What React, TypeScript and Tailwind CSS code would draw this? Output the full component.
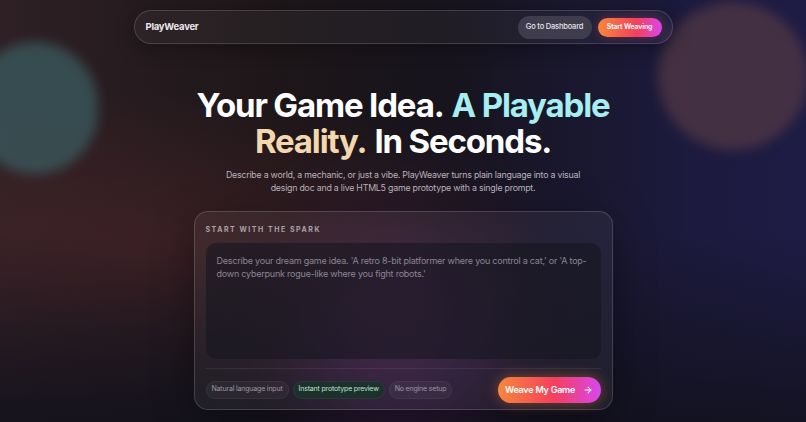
import { ArrowRight } from 'lucide-react';

const chips = [
    { label: 'Natural language input', tone: 'neutral' },
    { label: 'Instant prototype preview', tone: 'green' },
    { label: 'No engine setup', tone: 'neutral' },
];

function Backdrop() {
    return (
        <div className="absolute inset-0 overflow-hidden">
            <div className="absolute inset-0 bg-[linear-gradient(90deg,#2e2024_0%,#1d1619_35%,#17141d_55%,#1c1a3d_85%,#1e1c45_100%)]" />
            <div className="absolute inset-0 bg-[radial-gradient(ellipse_at_18%_60%,rgba(90,40,45,0.45),transparent_45%)]" />
            <div className="absolute inset-0 bg-[linear-gradient(180deg,transparent_55%,rgba(18,17,28,0.85)_100%)]" />
            <div className="absolute left-[-28px] top-[42px] w-[126px] h-[132px] rounded-full bg-[#3a585c] opacity-80 blur-[6px]" />
            <div className="absolute left-[658px] top-[2px] w-[150px] h-[148px] rounded-full bg-[#4b3444] opacity-85 blur-[6px]" />
            <div className="absolute left-[300px] top-[230px] w-[200px] h-[200px] rounded-full bg-[#6a2c78] opacity-40 blur-[50px]" />
        </div>
    );
}

function NavBar() {
    return (
        <nav className="w-[539px] h-[34px] mt-[10px] flex items-center justify-between rounded-full border border-white/15 bg-white/[0.04] pl-[11px] pr-[10px] shadow-[0_4px_20px_rgba(0,0,0,0.3)]">
            <span className="text-[9.5px] font-bold text-[#ece8ee] tracking-tight">PlayWeaver</span>
            <div className="flex items-center gap-[6px]">
                <button className="h-[23px] w-[74px] rounded-full bg-[#3f3d4d] text-[7.5px] font-medium text-[#e6e3ea] tracking-tight">
                    Go to Dashboard
                </button>
                <button className="h-[19px] w-[64px] rounded-full bg-[linear-gradient(90deg,#f7873a,#f43f5e_60%,#d946ef)] text-[7px] font-semibold text-white tracking-tight shadow-[0_0_10px_rgba(244,63,94,0.35)]">
                    Start Weaving
                </button>
            </div>
        </nav>
    );
}

export default function App() {
    return (
        <div className="relative w-full h-[422px] overflow-hidden font-['Inter',sans-serif]">
            <Backdrop />
            <div className="relative flex flex-col items-center">
                <NavBar />

                <h1 className="mt-[43px] flex flex-col items-center text-[33px] leading-[36px] font-bold tracking-[-0.035em] text-white">
                    <span className="flex gap-[8px]">
                        <span className="inline-block">Your Game Idea.</span>
                        <span className="inline-block text-[#a6eef2]">A Playable</span>
                    </span>
                    <span className="flex gap-[8px]">
                        <span className="inline-block text-[#f3d7ae]">Reality.</span>
                        <span className="inline-block">In Seconds.</span>
                    </span>
                </h1>

                <p className="mt-[9px] w-[362px] text-center text-[8.8px] leading-[13px] text-[#b9b3bd] tracking-tight">
                    Describe a world, a mechanic, or just a vibe. PlayWeaver turns plain language into a visual design doc and a live HTML5 game prototype with a single prompt.
                </p>

                <section className="mt-[17px] w-[419px] h-[199px] rounded-[14px] border border-white/15 bg-white/[0.05] px-[11px] pt-[13px] shadow-[0_10px_40px_rgba(0,0,0,0.35)] flex flex-col">
                    <span className="text-[7px] font-bold tracking-[0.22em] text-[#aaa2a9]">START WITH THE SPARK</span>
                    <div className="mt-[7px] h-[116px] rounded-[10px] bg-[#16151f]/60 px-[11px] pt-[11px]">
                        <p className="text-[9px] leading-[13px] text-[#8b8594] tracking-tight">
                            Describe your dream game idea. 'A retro 8-bit platformer where you control a cat,' or 'A top-down cyberpunk rogue-like where you fight robots.'
                        </p>
                    </div>
                    <div className="mt-[9px] border-t border-white/[0.07] pt-[8px] flex items-center justify-between">
                        <div className="flex items-center gap-[4px]">
                            {chips.map((c) => (
                                <span
                                    key={c.label}
                                    className={`h-[18px] px-[5px] flex items-center rounded-full border text-[7px] tracking-tight ${c.tone === 'green'
                                        ? 'bg-[#1d302c] border-white/5 text-[#b9e6cf]'
                                        : 'bg-white/[0.04] border-white/5 text-[#9d97a4]'
                                        }`}
                                >
                                    {c.label}
                                </span>
                            ))}
                        </div>
                        <button className="h-[26px] w-[103px] flex items-center justify-center gap-[8px] rounded-full bg-[linear-gradient(90deg,#f7873a,#f43f5e_55%,#d946ef)] text-[9px] font-semibold text-white tracking-tight shadow-[0_0_14px_rgba(247,120,60,0.45)]">
                            Weave My Game
                            <ArrowRight className="w-[10px] h-[10px]" strokeWidth={2.5} />
                        </button>
                    </div>
                </section>
            </div>
        </div>
    );
}
